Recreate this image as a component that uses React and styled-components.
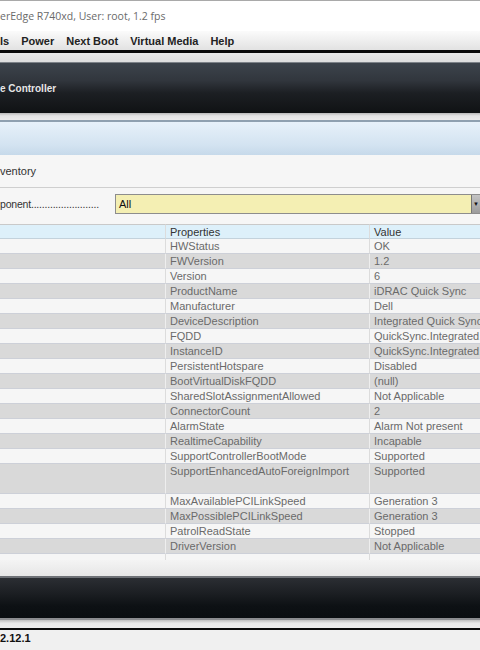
import styled, { createGlobalStyle } from "styled-components";

const Global = createGlobalStyle`
  html, body {
    margin: 0;
    padding: 0;
    background: #f0f0f0;
  }
  body {
    width: 480px;
    height: 650px;
    overflow: hidden;
    font-family: "Liberation Sans", Arial, sans-serif;
  }
`;

const Page = styled.div`
  width: 480px;
  height: 650px;
  display: flex;
  flex-direction: column;
  overflow: hidden;
`;

const TitleBar = styled.div`
  height: 30px;
  border-top: 1px solid #a9a9a9;
  background: #fff;
  display: flex;
  align-items: center;
  font-family: "Open Sans", "Liberation Sans", sans-serif;
  font-size: 10.5px;
  color: #6a6a6a;
  white-space: nowrap;
`;

const MenuBar = styled.div`
  height: 19px;
  background: linear-gradient(#fbfbfb, #ececec 60%, #e2e2e2);
  display: flex;
  align-items: center;
  gap: 12px;
  font-size: 11px;
  font-weight: bold;
  color: #222;
  white-space: nowrap;
  border-bottom: 3px solid #0a0a0a;
`;

const Strip = styled.div`
  height: ${(p) => p.$h}px;
  background: ${(p) => p.$bg || "#e6e6e6"};
`;

const Banner = styled.div`
  height: 50px;
  border-top: 1px solid #7d8288;
  background: linear-gradient(#3d444c 0%, #31363d 35%, #1c1f23 60%, #101214 100%);
  display: flex;
  align-items: center;
  font-size: 10px;
  font-weight: bold;
  color: #e6e6e6;
  white-space: nowrap;
`;

const BlueBar = styled.div`
  height: 33px;
  border-top: 2px solid #8fa0b0;
  background: linear-gradient(#e7f1fa, #d3e3f1 70%, #c6d9ea);
`;

const Section = styled.div`
  height: ${(p) => p.$h}px;
  background: #f6f6f6;
  border-bottom: ${(p) => (p.$line ? "1px solid #cfcfcf" : "none")};
  display: flex;
  align-items: center;
  font-size: 11px;
  color: #333;
  white-space: nowrap;
`;

const Leader = styled.span`
  width: 115px;
  font-size: 10.5px;
  letter-spacing: -0.2px;
`;

const Select = styled.div`
  flex: 1;
  height: 18px;
  border: 1px solid #8d8d8d;
  border-right: none;
  background: #f4efb3;
  display: flex;
  align-items: center;
  justify-content: space-between;
  padding-left: 3px;
  font-size: 11px;
  color: #111;
`;

const DropBtn = styled.div`
  width: 8px;
  height: 18px;
  background: linear-gradient(#c4c4c4, #9c9c9c);
  border-left: 1px solid #777;
  display: flex;
  align-items: center;
  justify-content: center;
  font-size: 6px;
  color: #111;
  overflow: hidden;
`;

const Table = styled.div`
  display: grid;
  grid-template-columns: 165px 204px 1fr;
  background: #f6f6f6;
`;

const Cell = styled.div`
  height: ${(p) => p.$h || 15}px;
  box-sizing: border-box;
  padding: 1px 0 0 4px;
  font-size: 11px;
  line-height: 13px;
  color: ${(p) => (p.$head ? "#333" : "#6a6a6a")};
  white-space: nowrap;
  overflow: hidden;
  background: ${(p) => (p.$head ? "#ddf0fa" : p.$alt ? "#d9d9d9" : "#f6f6f6")};
  border-bottom: 1px solid ${(p) => (p.$head ? "#c3d2dc" : "#cdd0d8")};
  border-left: ${(p) => (p.$first ? "none" : `1px solid ${p.$alt ? "#eeeeee" : "#dcdcdc"}`)};
  border-top: ${(p) => (p.$head ? "1px solid #c9c9c9" : "none")};
`;

const Tail = styled.div`
  height: 6px;
  display: grid;
  grid-template-columns: 165px 204px 1fr;
  background: #f6f6f6;
`;

const TailCell = styled.div`
  border-left: ${(p) => (p.$first ? "none" : "1px solid #dcdcdc")};
`;

const Footer = styled.div`
  height: 40px;
  border-top: 2px solid #6e7176;
  border-bottom: 2px solid #8b8d90;
  background: linear-gradient(#2b2e33 0%, #1b1e22 40%, #0d1114 70%, #0a0e11 100%);
`;

const Version = styled.div`
  flex: 1;
  border-top: 2px solid #0a0a0a;
  background: #f0f0f0;
  display: flex;
  align-items: flex-start;
  padding-top: 2px;
  font-size: 11px;
  font-weight: bold;
  color: #111;
`;

const rows = [
  ["HWStatus", "OK"],
  ["FWVersion", "1.2"],
  ["Version", "6"],
  ["ProductName", "iDRAC Quick Sync"],
  ["Manufacturer", "Dell"],
  ["DeviceDescription", "Integrated Quick Sync"],
  ["FQDD", "QuickSync.Integrated.1"],
  ["InstanceID", "QuickSync.Integrated.1"],
  ["PersistentHotspare", "Disabled"],
  ["BootVirtualDiskFQDD", "(null)"],
  ["SharedSlotAssignmentAllowed", "Not Applicable"],
  ["ConnectorCount", "2"],
  ["AlarmState", "Alarm Not present"],
  ["RealtimeCapability", "Incapable"],
  ["SupportControllerBootMode", "Supported"],
  ["SupportEnhancedAutoForeignImport", "Supported", 30],
  ["MaxAvailablePCILinkSpeed", "Generation 3"],
  ["MaxPossiblePCILinkSpeed", "Generation 3"],
  ["PatrolReadState", "Stopped"],
  ["DriverVersion", "Not Applicable"],
];

export default function App() {
  return (
    <Page>
      <Global />
      <TitleBar>erEdge R740xd, User: root, 1.2 fps</TitleBar>
      <MenuBar>
        <span>ls</span>
        <span>Power</span>
        <span>Next Boot</span>
        <span>Virtual Media</span>
        <span>Help</span>
      </MenuBar>
      <Strip $h={9} $bg="linear-gradient(#e9e9e9, #dedede)" />
      <Banner>e Controller</Banner>
      <Strip $h={7} $bg="linear-gradient(#b9b9b9, #e4e4e4 40%, #ececec)" />
      <BlueBar />
      <Section $h={32} $line>ventory</Section>
      <Section $h={32}>
        <Leader>ponent.........................</Leader>
        <Select>
          <span>All</span>
          <DropBtn>▼</DropBtn>
        </Select>
      </Section>
      <Strip $h={4} $bg="#f6f6f6" />
      <Table>
        <Cell $head $first />
        <Cell $head>Properties</Cell>
        <Cell $head>Value</Cell>
        {rows.map(([k, v, h], i) => {
          const alt = i % 2 === 1;
          return [
            <Cell key={k + "a"} $first $alt={alt} $h={h} />,
            <Cell key={k + "b"} $alt={alt} $h={h}>{k}</Cell>,
            <Cell key={k + "c"} $alt={alt} $h={h}>{v}</Cell>,
          ];
        })}
      </Table>
      <Tail>
        <TailCell $first />
        <TailCell />
        <TailCell />
      </Tail>
      <Strip $h={16} $bg="linear-gradient(#f4f4f4, #e6e6e6)" />
      <Footer />
      <Strip $h={8} $bg="linear-gradient(#bdbdbd, #e8e8e8 40%, #ececec)" />
      <Version>2.12.1</Version>
    </Page>
  );
}
